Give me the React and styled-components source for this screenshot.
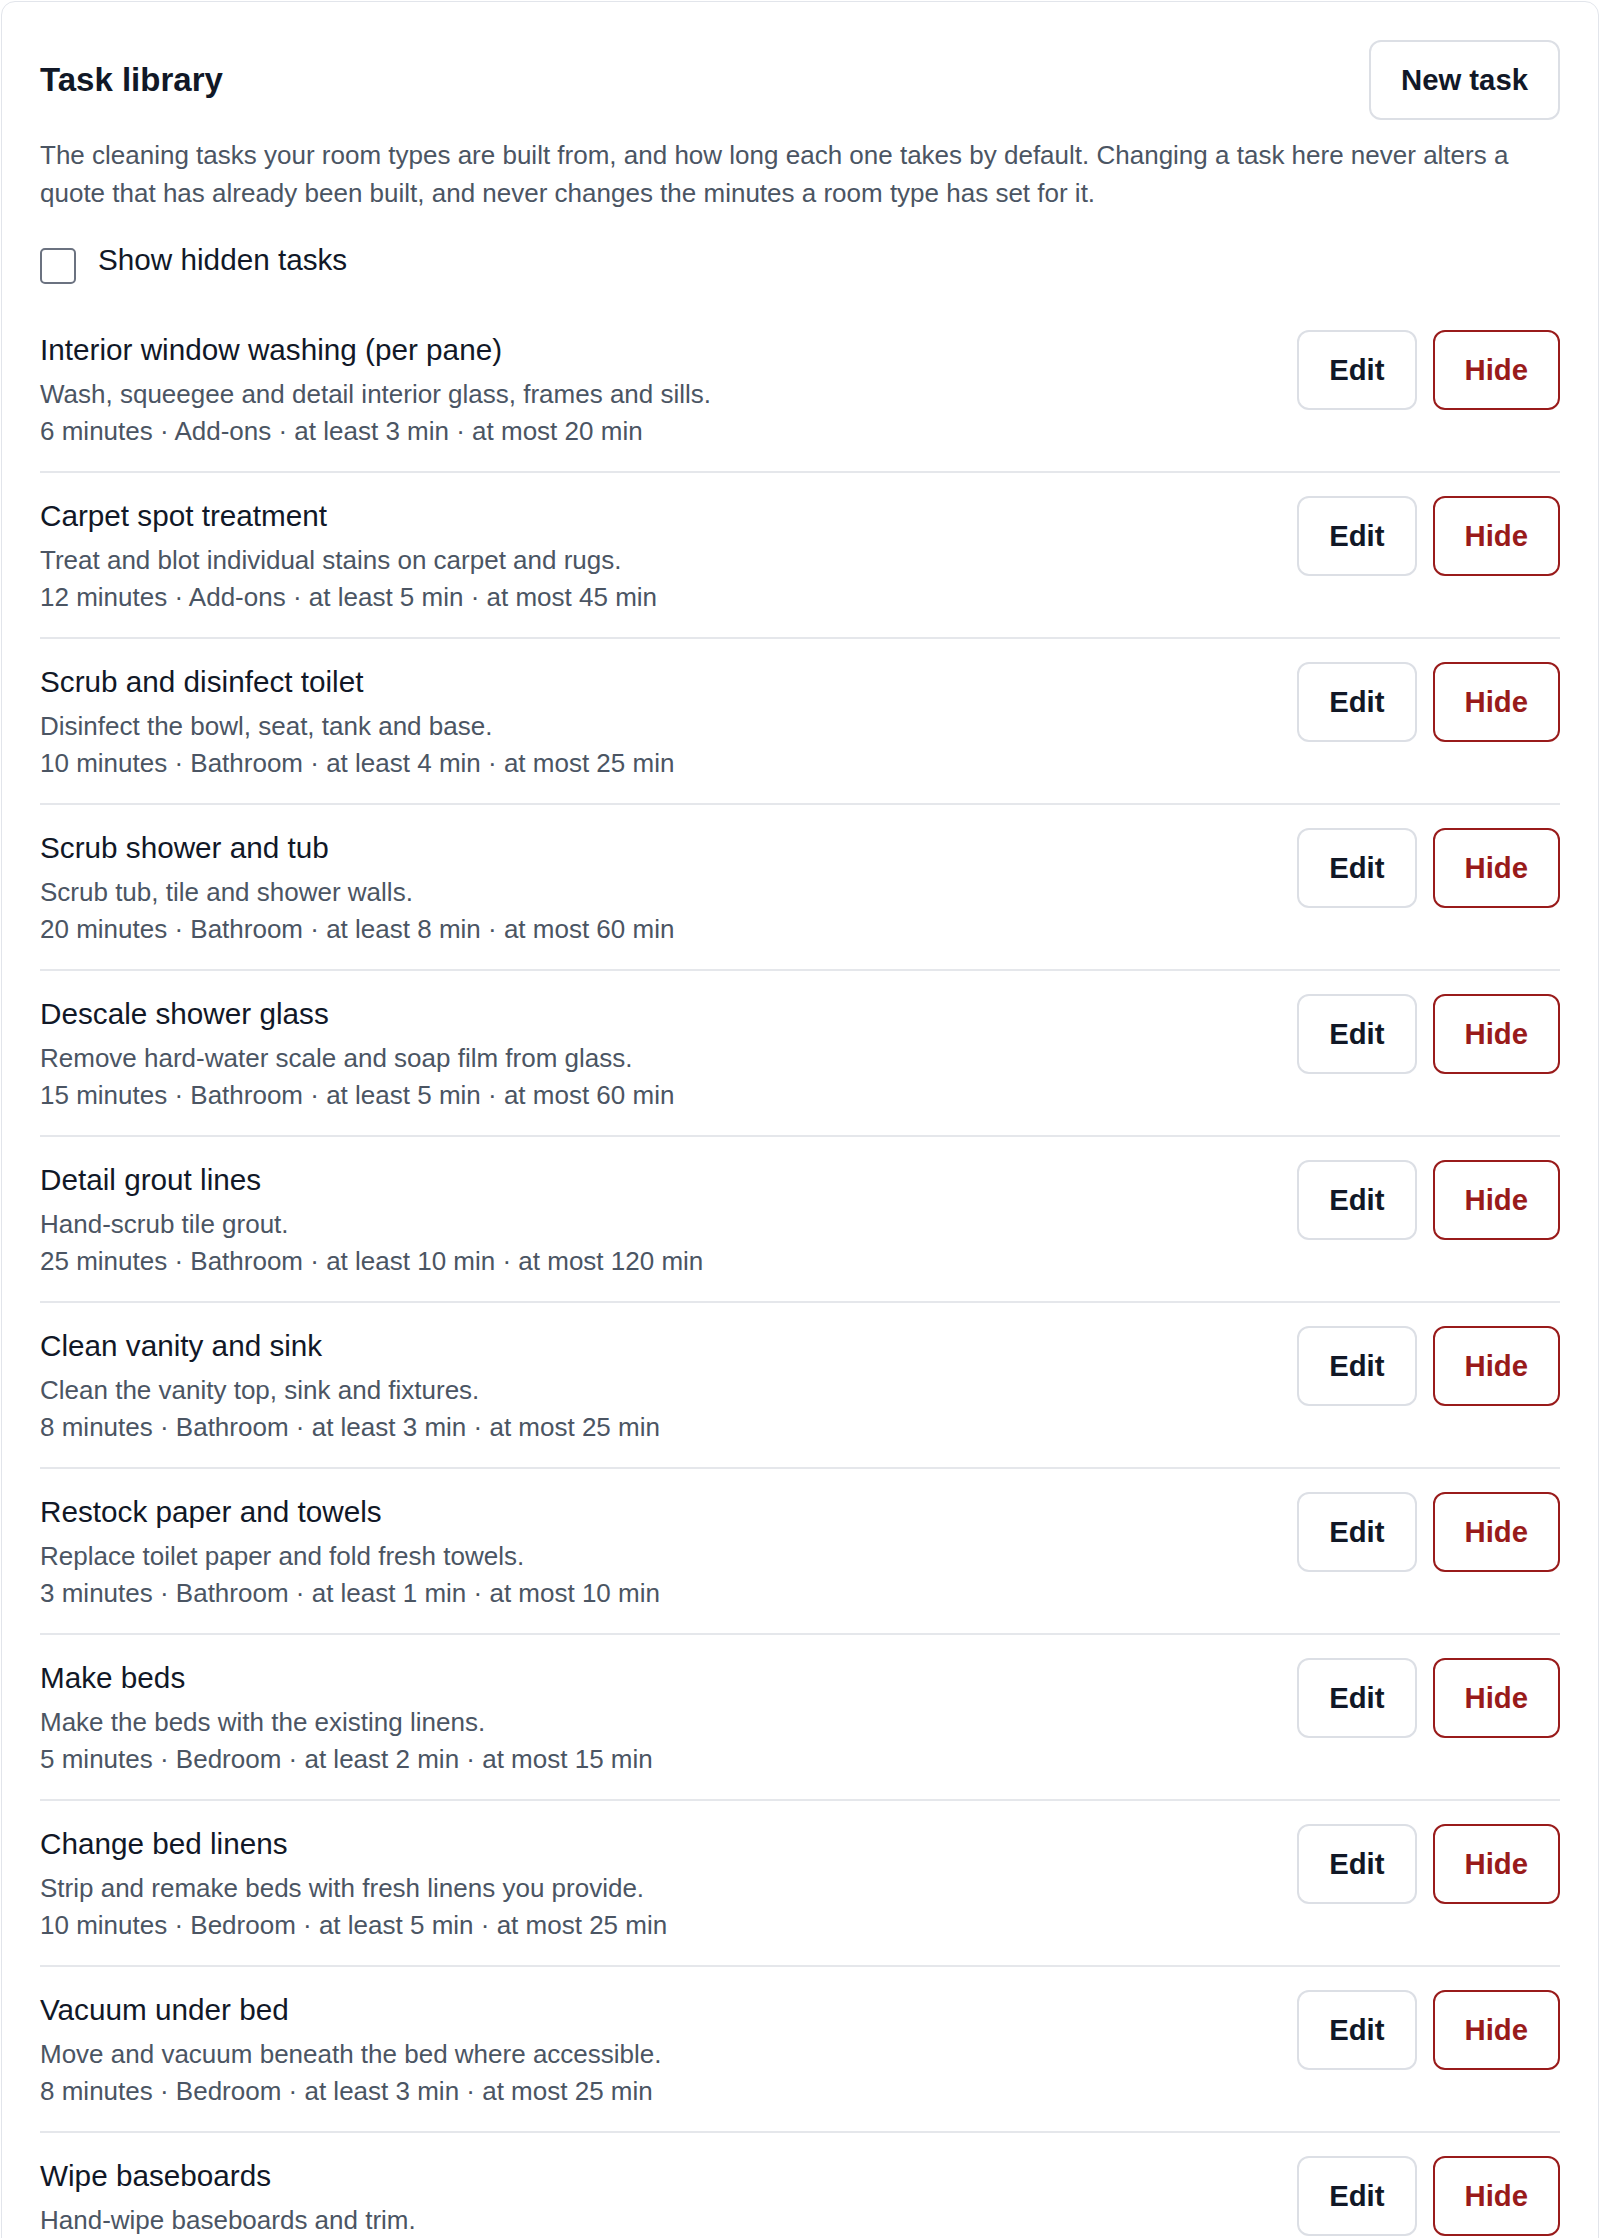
import React, { useState } from "react"
import styled, { createGlobalStyle } from "styled-components"

const tasks = [
    { name: "Interior window washing (per pane)", text: "Wash, squeegee and detail interior glass, frames and sills.", minutes: 6, room: "Add-ons", min: 3, max: 20 },
    { name: "Carpet spot treatment", text: "Treat and blot individual stains on carpet and rugs.", minutes: 12, room: "Add-ons", min: 5, max: 45 },
    { name: "Scrub and disinfect toilet", text: "Disinfect the bowl, seat, tank and base.", minutes: 10, room: "Bathroom", min: 4, max: 25 },
    { name: "Scrub shower and tub", text: "Scrub tub, tile and shower walls.", minutes: 20, room: "Bathroom", min: 8, max: 60 },
    { name: "Descale shower glass", text: "Remove hard-water scale and soap film from glass.", minutes: 15, room: "Bathroom", min: 5, max: 60 },
    { name: "Detail grout lines", text: "Hand-scrub tile grout.", minutes: 25, room: "Bathroom", min: 10, max: 120 },
    { name: "Clean vanity and sink", text: "Clean the vanity top, sink and fixtures.", minutes: 8, room: "Bathroom", min: 3, max: 25 },
    { name: "Restock paper and towels", text: "Replace toilet paper and fold fresh towels.", minutes: 3, room: "Bathroom", min: 1, max: 10 },
    { name: "Make beds", text: "Make the beds with the existing linens.", minutes: 5, room: "Bedroom", min: 2, max: 15 },
    { name: "Change bed linens", text: "Strip and remake beds with fresh linens you provide.", minutes: 10, room: "Bedroom", min: 5, max: 25 },
    { name: "Vacuum under bed", text: "Move and vacuum beneath the bed where accessible.", minutes: 8, room: "Bedroom", min: 3, max: 25 },
    { name: "Wipe baseboards", text: "Hand-wipe baseboards and trim." },
]

const GlobalStyle = createGlobalStyle`
body {
    margin: 0;
    background: #fff;
    font-family: "Liberation Sans", Arial, sans-serif;
    color: #111827;
}
`

export default function App() {
    const [showHidden, setShowHidden] = useState(false)

    return (
        <>
            <GlobalStyle />
            <Card>
                <Header>
                    <Title>Task library</Title>
                    <Button>New task</Button>
                </Header>
                <Intro>
                    The cleaning tasks your room types are built from, and how long each one takes by default.
                    Changing a task here never alters a quote that has already been built, and never changes the
                    minutes a room type has set for it.
                </Intro>
                <Toggle>
                    <Box checked={showHidden} onClick={() => setShowHidden(!showHidden)} />
                    Show hidden tasks
                </Toggle>
                <List>
                    {tasks.map((t) => (
                        <Row key={t.name}>
                            <Info>
                                <Name>{t.name}</Name>
                                <Text>{t.text}</Text>
                                {t.minutes && (
                                    <Text>
                                        {t.minutes} minutes · {t.room} · at least {t.min} min · at most {t.max} min
                                    </Text>
                                )}
                            </Info>
                            <Actions>
                                <Button>Edit</Button>
                                <Button danger>Hide</Button>
                            </Actions>
                        </Row>
                    ))}
                </List>
            </Card>
        </>
    )
}

const Card = styled.section`
margin: 1px 1px 0 1px;
border: 1px solid #e2e5eb;
border-radius: 14px;
padding: 38px;
background: #fff;
`

const Header = styled.div`
display: flex;
justify-content: space-between;
align-items: center;
`

const Title = styled.h2`
margin: 0;
font-size: 33px;
font-weight: 700;
color: #111827;
`

const Button = styled.button`
height: 80px;
padding: 0 30px;
border: 2px solid ${(p) => (p.danger ? "#991b1b" : "#dcdfe5")};
border-radius: 12px;
background: #fff;
color: ${(p) => (p.danger ? "#991b1b" : "#111827")};
font-family: inherit;
font-size: 29.3px;
font-weight: 700;
cursor: pointer;
`

const Intro = styled.p`
margin: 17px 0 0;
font-size: 26px;
line-height: 37.5px;
color: #4b5563;
`

const Toggle = styled.label`
display: flex;
align-items: flex-start;
gap: 22px;
margin-top: 27px;
font-size: 29.7px;
line-height: 42px;
color: #111827;
`

const Box = styled.span`
width: 36px;
height: 36px;
margin-top: 9px;
box-sizing: border-box;
border: 2px solid #6b7280;
border-radius: 5px;
background: ${(p) => (p.checked ? "#111827" : "#fff")};
flex-shrink: 0;
`

const List = styled.div`
margin-top: 23px;
`

const Row = styled.div`
display: flex;
justify-content: space-between;
align-items: flex-start;
padding: 22px 0;
border-bottom: 2px solid #e5e7eb;
`

const Info = styled.div`
display: flex;
flex-direction: column;
`

const Name = styled.div`
font-size: 29.7px;
line-height: 42px;
color: #111827;
margin-bottom: 5px;
`

const Text = styled.div`
font-size: 26px;
line-height: 36.5px;
color: #4b5563;
`

const Actions = styled.div`
display: flex;
gap: 16px;
padding-top: 1px;
`
